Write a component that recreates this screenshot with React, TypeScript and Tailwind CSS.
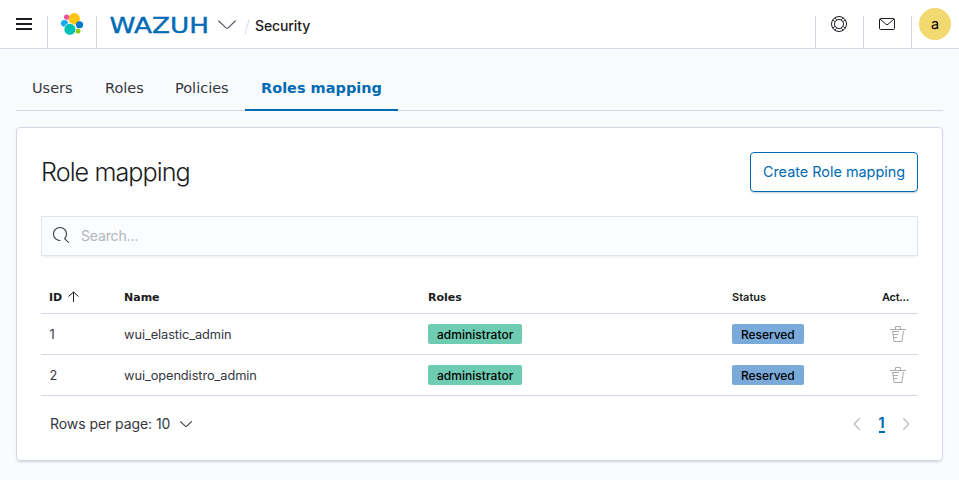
import type { ReactNode } from 'react';

function Icon({ d, size = 16, box = 16 }: { d: string; size?: number; box?: number }) {
  return (
    <svg width={size} height={size} viewBox={`0 0 ${box} ${box}`} fill="currentColor" className="block shrink-0">
      <path fillRule="evenodd" d={d} />
    </svg>
  );
}

const CHEVRON =
  'M13.069 5.157L8.384 9.768a.546.546 0 01-.768 0L2.93 5.158a.552.552 0 00-.771 0 .53.53 0 000 .759l4.684 4.61c.641.631 1.672.63 2.312 0l4.684-4.61a.53.53 0 000-.76.552.552 0 00-.771 0z';
const SEARCH =
  'M11.271 11.978l3.872 3.873a.502.502 0 00.708 0 .502.502 0 000-.708l-3.565-3.564c2.38-2.747 2.267-6.923-.342-9.532-2.73-2.73-7.17-2.73-9.898 0-2.728 2.729-2.728 7.17 0 9.9a6.955 6.955 0 004.949 2.05.5.5 0 000-1 5.96 5.96 0 01-4.242-1.757 6.01 6.01 0 010-8.486 6.004 6.004 0 018.484 0 6.01 6.01 0 010 8.486.5.5 0 00.034.738z';
const TRASH =
  'M11 3h5v1H0V3h5V1a1 1 0 011-1h4a1 1 0 011 1v2zm-7.056 8H7v1H4.1l.392 2.519c.042.269.254.458.493.458h6.03c.239 0 .451-.189.493-.458l1.498-9.576H14l-1.504 9.73c-.116.747-.74 1.304-1.481 1.304h-6.03c-.741 0-1.365-.557-1.481-1.304l-1.511-9.73H9V5.95H3.157L3.476 8H8v1H3.632l.312 2zM6 3h4V1H6v2z';

function ElasticLogo() {
  return (
    <svg width="24" height="24" viewBox="0 0 24 24" className="block">
      <ellipse cx="14.2" cy="6.8" rx="5.8" ry="5.9" fill="#fec514" />
      <circle cx="6.6" cy="5.1" r="2.6" fill="#f04e98" />
      <ellipse cx="4.5" cy="11.3" rx="3.6" ry="3.4" fill="#1ba9f5" />
      <ellipse cx="19.5" cy="12.7" rx="3.6" ry="3.5" fill="#0077cc" />
      <circle cx="17.9" cy="18.9" r="2.5" fill="#93c90e" />
      <circle cx="9.9" cy="17.3" r="5.9" fill="#00bfb3" stroke="#fff" strokeWidth="0.7" />
    </svg>
  );
}

function Header() {
  return (
    <header className="flex h-[49px] items-start border-b border-[#d3dae6] bg-white">
      <button className="flex h-12 w-[47px] items-center pl-4 text-[#1a1c21]">
        <svg width="16" height="12" viewBox="0 0 16 12" fill="currentColor">
          <path d="M0 0h16v2H0zM0 5h16v2H0zM0 10h16v2H0z" />
        </svg>
      </button>
      <div className="mt-4 h-8 w-px bg-[#d3dae6]" />
      <div className="flex h-12 w-12 items-center justify-center">
        <ElasticLogo />
      </div>
      <div className="mt-4 h-8 w-px bg-[#d3dae6]" />
      <div className="flex h-12 items-center pt-0.5 pl-[13px]">
        <svg width="98" height="28" viewBox="0 0 98 28" className="block overflow-visible">
          <text
            x="-0.5"
            y="22"
            textLength="99.5"
            lengthAdjust="spacingAndGlyphs"
            fill="#006bb4"
            stroke="#006bb4"
            strokeWidth="0.4"
            className="font-['DejaVu_Sans',sans-serif] text-[22px]"
          >
            WAZUH
          </text>
        </svg>
        <svg width="18" height="10" viewBox="0 0 18 10" className="ml-[10px] block" fill="none" stroke="#535966" strokeWidth="1.2" strokeLinecap="round" strokeLinejoin="round">
          <path d="M0.7 1L8 7.9Q9 8.8 10 7.9L17.3 1" />
        </svg>
        <svg width="6" height="16" viewBox="0 0 6 16" className="mt-1 ml-2 block" stroke="#d3dae6">
          <path d="M1 15.5L5 0.5" />
        </svg>
        <span className="mt-0.5 ml-[5px] text-[14px] leading-6 font-medium tracking-[-0.1px] text-[#1a1c21]">Security</span>
      </div>
      <div className="ml-auto flex items-start text-[#1a1c21]">
        <div className="mt-4 h-8 w-px bg-[#d3dae6]" />
        <div className="flex h-12 w-[47px] items-center pl-[15px]">
          <svg width="16" height="16" viewBox="0 0 16 16" fill="none" stroke="currentColor" className="block">
            <circle cx="8" cy="8" r="7.5" />
            <circle cx="8" cy="8" r="4.5" />
            <path d="M5.8 4L3.74 1.94M4 5.8L1.94 3.74M10.2 4L12.26 1.94M12 5.8L14.06 3.74M5.8 12L3.74 14.06M4 10.2L1.94 12.26M10.2 12L12.26 14.06M12 10.2L14.06 12.26" />
          </svg>
        </div>
        <div className="mt-4 h-8 w-px bg-[#d3dae6]" />
        <div className="flex h-12 w-[47px] items-center pl-[15px]">
          <svg width="16" height="12" viewBox="0 0 16 12" fill="none" stroke="currentColor" className="block">
            <rect x="0.5" y="0.5" width="15" height="11" rx="1" />
            <path d="M1 1L7 6.3Q8 7 9 6.3L15 1" />
          </svg>
        </div>
        <div className="mt-4 h-8 w-px bg-[#d3dae6]" />
        <div className="flex h-12 w-[47px] items-center pl-[7px]">
          <div className="flex h-8 w-8 items-center justify-center rounded-full bg-[#f1d86f] text-[14.4px] text-black">a</div>
        </div>
      </div>
    </header>
  );
}

function Badge({ color, children }: { color: string; children: ReactNode }) {
  return (
    <span className={`inline-flex h-5 items-center rounded-[2px] pt-px text-[12px] font-medium text-black ${color}`}>
      {children}
    </span>
  );
}

const columns = 'grid grid-cols-[75px_304px_304px_150px_44px] items-center border-b border-[#d3dae6]';

function Row({ id, name }: { id: string; name: string }) {
  return (
    <div className={`${columns} h-[41px] text-[12.8px] tracking-[-0.08px]`}>
      <div className="pt-0.5 pl-[8.5px]">{id}</div>
      <div className="pt-0.5 pl-2">{name}</div>
      <div className="flex pl-2">
        <Badge color="w-[94px] bg-[#6dccb1] pl-[9px] tracking-[0.03px]">administrator</Badge>
      </div>
      <div className="flex pl-2">
        <Badge color="w-[72px] bg-[#79aad9] pl-[9px] tracking-[-0.06px]">Reserved</Badge>
      </div>
      <div className="flex pl-4 text-[#aaacb0]">
        <Icon d={TRASH} />
      </div>
    </div>
  );
}

export default function App() {
  return (
    <div className="h-[480px] overflow-hidden bg-[#fafbfd] font-['Inter',sans-serif] text-[#343741]">
      <Header />
      <main className="px-4 pt-4">
        <nav className="flex h-[46px] border-b border-[#d3dae6] font-['DejaVu_Sans',sans-serif] text-[14.5px] leading-[46px]">
          <span className="w-[73px] pl-4">Users</span>
          <span className="w-[70px] pl-4">Roles</span>
          <span className="w-[86px] pl-4">Policies</span>
          <span className="h-[46px] w-[153px] border-b-2 border-[#006bb4] pl-4 font-bold text-[#006bb4]">Roles mapping</span>
        </nav>
        <section className="mt-4 h-[334px] rounded border border-[#d3dae6] bg-white px-6 pt-6 shadow-[0_2px_2px_-1px_rgba(152,162,179,0.3),0_1px_5px_-2px_rgba(152,162,179,0.3)]">
          <div className="flex h-10 items-center justify-between">
            <h1 className="text-[25.2px] leading-10 font-light tracking-[-0.95px] text-[#1a1c21]">Role mapping</h1>
            <button className="h-10 w-[168px] rounded border border-[#006bb4] text-[14.4px] tracking-[0.01px] text-[#006bb4] shadow-[0_2px_2px_-1px_rgba(54,97,126,0.3)]">
              Create Role mapping
            </button>
          </div>
          <div className="mt-6 flex h-10 items-center border border-[#e2e5ee] bg-[#fbfcfd] pb-0.5 pl-[11px] shadow-[0_2px_2px_-1px_rgba(152,162,179,0.2)]">
            <Icon d={SEARCH} />
            <span className="ml-3 text-[14px] tracking-[-0.15px] text-[#b1b5be]">Search...</span>
          </div>
          <div className="mt-6">
            <div className={`${columns} h-[34px] text-[11px] font-bold text-[#1a1c21]`}>
              <div className="flex items-center pt-[3px] pl-2 font-['DejaVu_Sans',sans-serif]">
                ID
                <svg width="12" height="12" viewBox="0 0 12 12" fill="none" stroke="currentColor" className="mb-0.5 ml-[5px] block">
                  <path d="M6.5 11V1M1.5 5.5L6.5 1L11.5 5.5" />
                </svg>
              </div>
              <div className="pt-[3px] pl-2 font-['DejaVu_Sans',sans-serif]">Name</div>
              <div className="pt-[3px] pl-2 font-['DejaVu_Sans',sans-serif]">Roles</div>
              <div className="pt-0.5 pl-2 font-semibold">Status</div>
              <div className="pt-0.5 pl-2 font-semibold tracking-[-0.3px]">Act...</div>
            </div>
            <Row id="1" name="wui_elastic_admin" />
            <Row id="2" name="wui_opendistro_admin" />
          </div>
          <div className="flex items-center justify-between pt-4 pr-1 pl-[9px] text-[14px] leading-6 tracking-[-0.07px]">
            <span className="flex items-center gap-2">
              Rows per page: 10
              <Icon d={CHEVRON} />
            </span>
            <span className="flex items-center text-[#aaacb0]">
              <span className="rotate-90">
                <Icon d={CHEVRON} />
              </span>
              <span className="mr-[13.5px] ml-[13.5px] border-b-2 border-[#006bb4] leading-4 font-bold text-[#006bb4]">1</span>
              <span className="-rotate-90">
                <Icon d={CHEVRON} />
              </span>
            </span>
          </div>
        </section>
      </main>
    </div>
  );
}
